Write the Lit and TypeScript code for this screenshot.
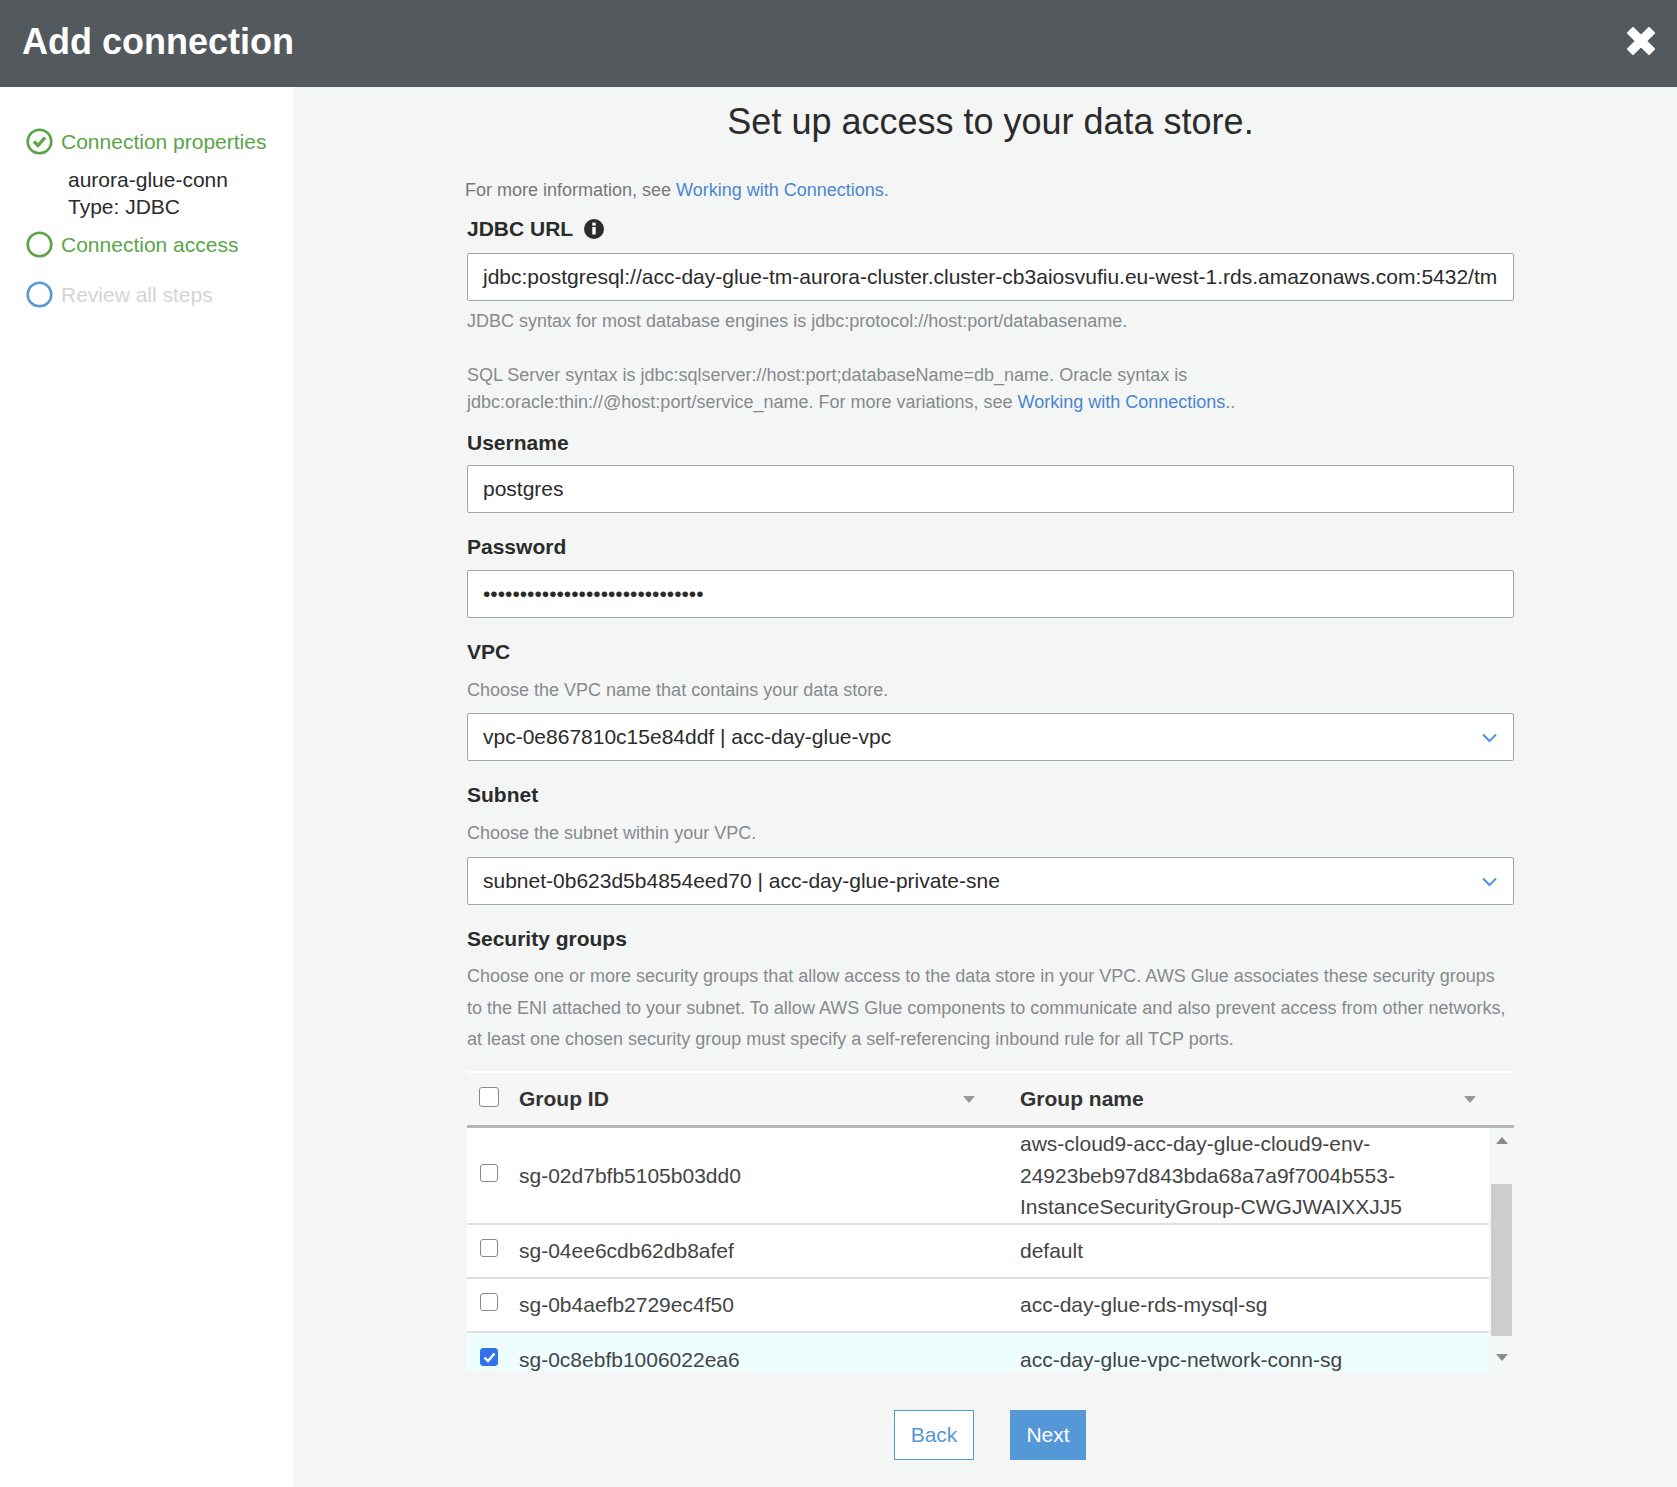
import { LitElement, html, css } from "lit";
import { customElement } from "lit/decorators.js";

const chevron = html`<svg class="chev" width="15" height="10" viewBox="0 0 15 10"><path d="M1 1.5l6.5 6.5 6.5-6.5" fill="none" stroke="#4a95dc" stroke-width="2"/></svg>`;

@customElement("app-root")
export class AppRoot extends LitElement {
  static styles = css`
    :host { display: block; width: 1677px; height: 1487px; overflow: hidden; font-family: "Liberation Sans", Arial, sans-serif; font-size: 20px; color: #2b2b2b; background: #f4f6f5; }
    .head { height: 87px; background: #54595d; color: #fff; display: flex; align-items: center; justify-content: space-between; padding: 0 22px 4px 22px; box-sizing: border-box; }
    .head h1 { margin: 0; font-size: 36px; font-weight: 700; }
    .head svg { transform: translateY(-1px); }
    .body { display: flex; height: 1400px; }
    .side { width: 293px; background: #fff; padding: 40px 0 0 26px; box-sizing: border-box; flex: none; }
    .step { display: flex; align-items: center; gap: 8px; height: 30px; color: #5aa548; font-size: 21px; }
    .step svg { transform: translateY(-1px); }
    .step.off { color: #d2d5d5; margin-top: 20px; }
    .meta { margin: 9px 0 10px 42px; line-height: 27px; font-size: 21px; }
    .main { flex: 1; padding: 0 163px 0 174px; box-sizing: border-box; }
    h2 { margin: 15px 0 0; text-align: center; font-weight: 400; font-size: 36px; line-height: 40px; }
    .info { font-size: 18px; margin: 36px 0 0 -2px; color: #777; line-height: 24px; }
    a { color: #4a86d0; }
    label { display: flex; align-items: center; gap: 11px; font-weight: 700; font-size: 21px; line-height: 24px; }
    .m15 { margin-top: 15px; } .m22 { margin-top: 22px; }
    .input { height: 48px; background: #fff; border: 1px solid #a0a5a8; border-radius: 2px; box-sizing: border-box; display: flex; align-items: center; justify-content: space-between; padding: 0 15px; font-size: 21px; white-space: nowrap; overflow: hidden; }
    .chev { transform: translate(-1px, 1px); }
    .mi12 { margin-top: 12px; } .mi9 { margin-top: 9px; } .mi10 { margin-top: 10px; } .mi11 { margin-top: 11px; }
    .hint { color: #868a8c; font-size: 18px; line-height: 27px; }
    .mh7 { margin-top: 7px; } .mh27 { margin-top: 27px; } .mh13 { margin-top: 13px; }
    .sg-text { line-height: 31.5px; margin-top: 10px; }
    .grid-head { display: grid; grid-template-columns: 52px 501px 1fr; height: 57px; box-sizing: border-box; align-items: center; background: #f6f6f6; border-top: 2px solid #fff; border-bottom: 3px solid #b5b5b5; font-weight: 700; font-size: 21px; color: #333; margin-top: 15.5px; }
    .cell { display: flex; justify-content: space-between; align-items: center; }
    .c1 { padding-right: 45px; } .c2 { padding-right: 38px; }
    .box { width: 18px; height: 18px; border: 1.5px solid #8a8a8a; border-radius: 3px; background: #fff; margin-left: 13px; box-sizing: border-box; transform: translateY(-3px); }
    .grid-head .box { width: 20px; height: 20px; margin-left: 12px; transform: translateY(-2px); }
    .box.on { background: #3273eb; border-color: #3273eb; display: flex; align-items: center; justify-content: center; }
    .rows-wrap { display: flex; height: 243px; overflow: hidden; }
    .rows { flex: 1; background: #fff; }
    .row { display: grid; grid-template-columns: 52px 501px 1fr; align-items: center; box-sizing: border-box; border-bottom: 2px solid #dedfe0; height: 54px; font-size: 21px; color: #444; }
    .row.tall { height: 97px; line-height: 31.5px; }
    .row.sel { background: #eefeff; border-bottom: 0; }
    .sb { width: 25px; background: #f5f7f6; position: relative; }
    .thumb { position: absolute; left: 2px; right: 2px; top: 56px; height: 152px; background: #cdcdcd; }
    .up { position: absolute; left: 7px; top: 9px; } .down { position: absolute; left: 7px; bottom: 10px; }
    .btns { display: flex; justify-content: center; gap: 36px; margin: 39px 0 0 -1px; }
    .btn { height: 50px; display: flex; align-items: center; justify-content: center; font-size: 21px; box-sizing: border-box; }
    .back { width: 80px; border: 1px solid #5598d8; color: #5598d8; background: #fff; }
    .next { width: 76px; background: #5598d8; color: #fff; }
  `;

  private sel(value: string, cls: string) {
    return html`<div class="input ${cls}"><span>${value}</span>${chevron}</div>`;
  }

  private row(id: string, name: unknown, cls = "", on = false) {
    return html`<div class="row ${cls}">
      <div class="box ${on ? "on" : ""}">${on ? html`<svg width="13" height="11" viewBox="0 0 13 11"><path d="M1.5 5.5l3.5 3.5 6.5-7.5" fill="none" stroke="#fff" stroke-width="2.4"/></svg>` : ""}</div>
      <div>${id}</div><div>${name}</div></div>`;
  }

  render() {
    const caret = html`<svg width="12" height="7" viewBox="0 0 12 7"><path d="M0 0h12L6 7z" fill="#999"/></svg>`;
    return html`
      <div class="head"><h1>Add connection</h1>
        <svg width="28" height="28" viewBox="0 0 28 28"><path d="M6 1L14 9L22 1L27 6L19 14L27 22L22 27L14 19L6 27L1 22L9 14L1 6Z" fill="#fff" stroke="#fff" stroke-width="2" stroke-linejoin="round"/></svg></div>
      <div class="body">
        <div class="side">
          <div class="step"><svg width="27" height="27" viewBox="0 0 27 27"><circle cx="13.5" cy="13.5" r="11.8" fill="none" stroke="#5aa548" stroke-width="2.6"/><path d="M8 13.5l4 4 7-8" fill="none" stroke="#5aa548" stroke-width="3.4"/></svg>Connection properties</div>
          <div class="meta">aurora-glue-conn<br/>Type: JDBC</div>
          <div class="step"><svg width="27" height="27" viewBox="0 0 27 27"><circle cx="13.5" cy="13.5" r="11.8" fill="none" stroke="#5aa548" stroke-width="2.6"/></svg>Connection access</div>
          <div class="step off"><svg width="27" height="27" viewBox="0 0 27 27"><circle cx="13.5" cy="13.5" r="11.8" fill="none" stroke="#5b9bd5" stroke-width="2.6"/></svg>Review all steps</div>
        </div>
        <div class="main">
          <h2>Set up access to your data store.</h2>
          <div class="info">For more information, see <a>Working with Connections.</a></div>
          <label class="m15">JDBC URL <svg width="20" height="20" viewBox="0 0 20 20"><circle cx="10" cy="10" r="10" fill="#2b2b2b"/><rect x="8.3" y="8" width="3.4" height="7.5" fill="#fff"/><rect x="8.3" y="3.6" width="3.4" height="3" fill="#fff"/></svg></label>
          <div class="input mi12">jdbc:postgresql://acc-day-glue-tm-aurora-cluster.cluster-cb3aiosvufiu.eu-west-1.rds.amazonaws.com:5432/tm</div>
          <div class="hint mh7">JDBC syntax for most database engines is jdbc:protocol://host:port/databasename.</div>
          <div class="hint mh27">SQL Server syntax is jdbc:sqlserver://host:port;databaseName=db_name. Oracle syntax is<br/>jdbc:oracle:thin://@host:port/service_name. For more variations, see <a>Working with Connections.</a>.</div>
          <label class="m15">Username</label>
          <div class="input mi10">postgres</div>
          <label class="m22">Password</label>
          <div class="input mi11">••••••••••••••••••••••••••••••</div>
          <label class="m22">VPC</label>
          <div class="hint mh13">Choose the VPC name that contains your data store.</div>
          ${this.sel("vpc-0e867810c15e84ddf | acc-day-glue-vpc", "mi9")}
          <label class="m22">Subnet</label>
          <div class="hint mh13">Choose the subnet within your VPC.</div>
          ${this.sel("subnet-0b623d5b4854eed70 | acc-day-glue-private-sne", "mi10")}
          <label class="m22">Security groups</label>
          <div class="hint sg-text">Choose one or more security groups that allow access to the data store in your VPC. AWS Glue associates these security groups to the ENI attached to your subnet. To allow AWS Glue components to communicate and also prevent access from other networks, at least one chosen security group must specify a self-referencing inbound rule for all TCP ports.</div>
          <div class="grid-head"><div class="box"></div><div class="cell c1">Group ID ${caret}</div><div class="cell c2">Group name ${caret}</div></div>
          <div class="rows-wrap"><div class="rows">
            ${this.row("sg-02d7bfb5105b03dd0", html`aws-cloud9-acc-day-glue-cloud9-env-<br/>24923beb97d843bda68a7a9f7004b553-<br/>InstanceSecurityGroup-CWGJWAIXXJJ5`, "tall")}
            ${this.row("sg-04ee6cdb62db8afef", "default")}
            ${this.row("sg-0b4aefb2729ec4f50", "acc-day-glue-rds-mysql-sg")}
            ${this.row("sg-0c8ebfb1006022ea6", "acc-day-glue-vpc-network-conn-sg", "sel", true)}
          </div><div class="sb">
            <svg class="up" width="12" height="7" viewBox="0 0 12 7"><path d="M0 7h12L6 0z" fill="#8a8a8a"/></svg>
            <div class="thumb"></div>
            <svg class="down" width="12" height="7" viewBox="0 0 12 7"><path d="M0 0h12L6 7z" fill="#8a8a8a"/></svg>
          </div></div>
          <div class="btns"><div class="btn back">Back</div><div class="btn next">Next</div></div>
        </div>
      </div>`;
  }
}
